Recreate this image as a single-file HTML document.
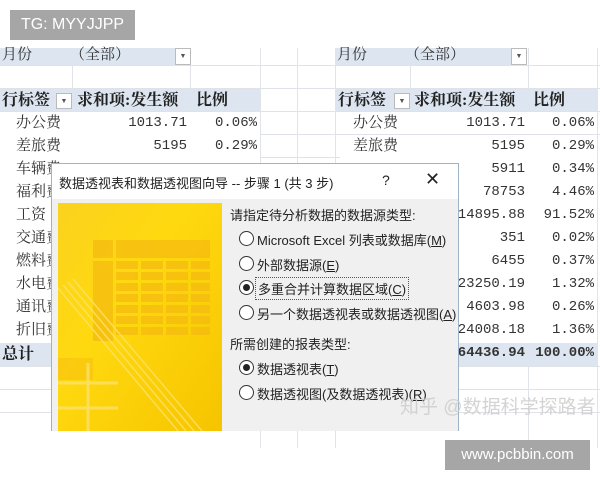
<!DOCTYPE html>
<html><head><meta charset="utf-8"><style>
body{margin:0;width:600px;height:480px;background:#fff;position:relative;overflow:hidden;font-family:"Liberation Serif","Noto Serif CJK SC",serif;}
.a{position:absolute;white-space:nowrap}
.t{font-size:15px;color:#333;line-height:23px}
.n{font-family:"Liberation Mono",monospace;font-size:14px;color:#333;line-height:23px}
.b{font-weight:bold;color:#222}
.bg{position:absolute;background:#dde6f0}
.hl{position:absolute;height:1px;background:#dfe3e8}
.vl{position:absolute;width:1px;background:#e0e3e8}
.r{text-align:right}
.dlg{position:absolute;left:51px;top:163px;width:406px;height:267px;background:#f0f0f0;border:1px solid #9fb3c8;border-bottom:none;font-family:"Liberation Sans","Noto Sans CJK SC",sans-serif;color:#222}
.rad{position:absolute;width:13px;height:13px;border:1px solid #333;border-radius:50%;background:#fff}
.rad.on::after{content:"";position:absolute;left:3px;top:3px;width:7px;height:7px;border-radius:50%;background:#222}
.lb{position:absolute;font-size:13px;white-space:nowrap}
</style></head><body>
<div class="bg" style="left:0;top:48px;width:190px;height:17px"></div>
<div class="bg" style="left:0;top:88px;width:260px;height:23px"></div>
<div class="bg" style="left:0;top:343px;width:260px;height:23px"></div>
<div class="bg" style="left:335px;top:48px;width:190px;height:17px"></div>
<div class="bg" style="left:335px;top:88px;width:262px;height:23px"></div>
<div class="bg" style="left:335px;top:343px;width:262px;height:23px"></div>
<div class="hl" style="left:0;top:65px;width:600px"></div>
<div class="hl" style="left:0;top:88px;width:600px"></div>
<div class="hl" style="left:0;top:111px;width:600px"></div>
<div class="hl" style="left:260px;top:134px;width:340px"></div>
<div class="hl" style="left:260px;top:157px;width:80px"></div>
<div class="hl" style="left:0;top:366px;width:600px"></div>
<div class="hl" style="left:0;top:389px;width:600px"></div>
<div class="hl" style="left:0;top:412px;width:600px"></div>
<div class="vl" style="left:72px;top:65px;height:23px"></div>
<div class="vl" style="left:190px;top:48px;height:40px"></div>
<div class="vl" style="left:260px;top:48px;height:400px"></div>
<div class="vl" style="left:297px;top:48px;height:400px"></div>
<div class="vl" style="left:335px;top:48px;height:400px"></div>
<div class="vl" style="left:410px;top:65px;height:23px"></div>
<div class="vl" style="left:528px;top:48px;height:40px"></div>
<div class="vl" style="left:597px;top:48px;height:400px"></div>
<div class="vl" style="left:528px;top:366px;height:80px"></div>
<div class="a t" style="left:2px;top:44px">月份</div>
<div class="a t" style="left:70px;top:44px">（全部）</div>
<div class="a" style="left:175px;top:48px;width:14px;height:15px;background:#fff;border:1px solid #bbb;font-size:7px;text-align:center;line-height:15px;color:#555">▼</div>
<div class="a t b" style="left:2px;top:89px;font-size:16px">行标签</div>
<div class="a" style="left:56px;top:93px;width:14px;height:14px;background:#fff;border:1px solid #bbb;font-size:7px;text-align:center;line-height:14px;color:#555">▼</div>
<div class="a t b" style="left:77px;top:89px;font-size:16px">求和项:发生额</div>
<div class="a t b" style="left:196px;top:89px;font-size:16px">比例</div>
<div class="a t" style="left:16px;top:112px;line-height:23px">办公费<br>差旅费<br>车辆费<br>福利费<br>工资<br>交通费<br>燃料费<br>水电费<br>通讯费<br>折旧费</div>
<div class="a n r" style="left:100px;width:87px;top:112px">1013.71<br>5195</div>
<div class="a n r" style="left:190px;width:67px;top:112px">0.06%<br>0.29%</div>
<div class="a t b" style="left:2px;top:343px;font-size:16px">总计</div>
<div class="a t" style="left:337px;top:44px">月份</div>
<div class="a t" style="left:405px;top:44px">（全部）</div>
<div class="a" style="left:511px;top:48px;width:14px;height:15px;background:#fff;border:1px solid #bbb;font-size:7px;text-align:center;line-height:15px;color:#555">▼</div>
<div class="a t b" style="left:338px;top:89px;font-size:16px">行标签</div>
<div class="a" style="left:394px;top:93px;width:14px;height:14px;background:#fff;border:1px solid #bbb;font-size:7px;text-align:center;line-height:14px;color:#555">▼</div>
<div class="a t b" style="left:414px;top:89px;font-size:16px">求和项:发生额</div>
<div class="a t b" style="left:533px;top:89px;font-size:16px">比例</div>
<div class="a t" style="left:353px;top:112px">办公费<br>差旅费</div>
<div class="a n r" style="left:420px;width:105px;top:112px">1013.71<br>5195<br>5911<br>78753<br>1614895.88<br>351<br>6455<br>23250.19<br>4603.98<br>24008.18<br><b>1764436.94</b></div>
<div class="a n r" style="left:525px;width:69px;top:112px">0.06%<br>0.29%<br>0.34%<br>4.46%<br>91.52%<br>0.02%<br>0.37%<br>1.32%<br>0.26%<br>1.36%<br><b>100.00%</b></div>
<div class="dlg">
<div style="position:absolute;left:0;top:0;width:406px;height:35px;background:#fff"></div>
<div class="lb" style="left:7px;top:9px;font-size:13px">数据透视表和数据透视图向导 -- 步骤 1 (共 3 步)</div>
<div class="lb" style="left:330px;top:8px;font-size:14px">?</div>
<div class="lb" style="left:373px;top:5px;font-size:18px">✕</div>
<svg style="position:absolute;left:6px;top:39px" width="164" height="228" viewBox="0 0 164 228">
<defs><linearGradient id="g" x1="0" y1="0" x2="1" y2="1"><stop offset="0" stop-color="#fbd21e"/><stop offset=".4" stop-color="#ffd90f"/><stop offset="1" stop-color="#f6c400"/></linearGradient></defs>
<rect width="164" height="228" fill="url(#g)"/>
<g fill="#f5bb10" opacity=".75">
<rect x="35" y="37" width="20" height="18"/><rect x="58" y="37" width="94" height="18"/>
<rect x="35" y="58" width="20" height="80"/>
<g id="rw"><rect x="58" y="58" width="22" height="8"/><rect x="83" y="58" width="22" height="8"/><rect x="108" y="58" width="22" height="8"/><rect x="133" y="58" width="19" height="8"/></g>
<use href="#rw" y="11"/><use href="#rw" y="22"/><use href="#rw" y="33"/><use href="#rw" y="44"/><use href="#rw" y="55"/><use href="#rw" y="66"/>
<rect x="0" y="155" width="35" height="22" opacity=".6"/>
</g>
<g stroke="#fde26a" stroke-width="1.5" fill="none" opacity=".8">
<path d="M0 85 L120 228"/><path d="M5 82 L128 228"/><path d="M10 79 L136 228"/><path d="M15 76 L144 228"/>
</g>
<g stroke="#fbe47a" stroke-width="3" opacity=".7"><path d="M0 180 H60 M0 205 H60 M30 160 V228"/></g>
</svg>
<div class="lb" style="left:178px;top:41px">请指定待分析数据的数据源类型:</div>
<div class="rad" style="left:187px;top:67px"></div><div class="lb" style="left:205px;top:66px">Microsoft Excel 列表或数据库(<u>M</u>)</div>
<div class="rad" style="left:187px;top:92px"></div><div class="lb" style="left:205px;top:91px">外部数据源(<u>E</u>)</div>
<div class="rad on" style="left:187px;top:116px"></div><div class="lb" style="left:203px;top:113px;border:1px dotted #555;padding:1px 2px">多重合并计算数据区域(<u>C</u>)</div>
<div class="rad" style="left:187px;top:141px"></div><div class="lb" style="left:205px;top:140px">另一个数据透视表或数据透视图(<u>A</u>)</div>
<div class="lb" style="left:178px;top:170px">所需创建的报表类型:</div>
<div class="rad on" style="left:187px;top:196px"></div><div class="lb" style="left:205px;top:195px">数据透视表(<u>T</u>)</div>
<div class="rad" style="left:187px;top:221px"></div><div class="lb" style="left:205px;top:220px">数据透视图(及数据透视表)(<u>R</u>)</div>
</div>
<div class="a" style="left:400px;top:392px;font-size:19px;color:rgba(205,205,205,.85);font-family:'Liberation Sans','Noto Sans CJK SC',sans-serif">知乎 @数据科学探路者</div>
<div class="a" style="left:10px;top:10px;width:125px;height:30px;background:#a6a6a6;color:#fff;font-family:'Liberation Sans',sans-serif;font-size:16px;line-height:30px;text-align:center">TG: MYYJJPP</div>
<div class="a" style="left:445px;top:440px;width:145px;height:30px;background:#a6a6a6;color:#fff;font-family:'Liberation Sans',sans-serif;font-size:15px;line-height:30px;text-align:center">www.pcbbin.com</div>
</body></html>
